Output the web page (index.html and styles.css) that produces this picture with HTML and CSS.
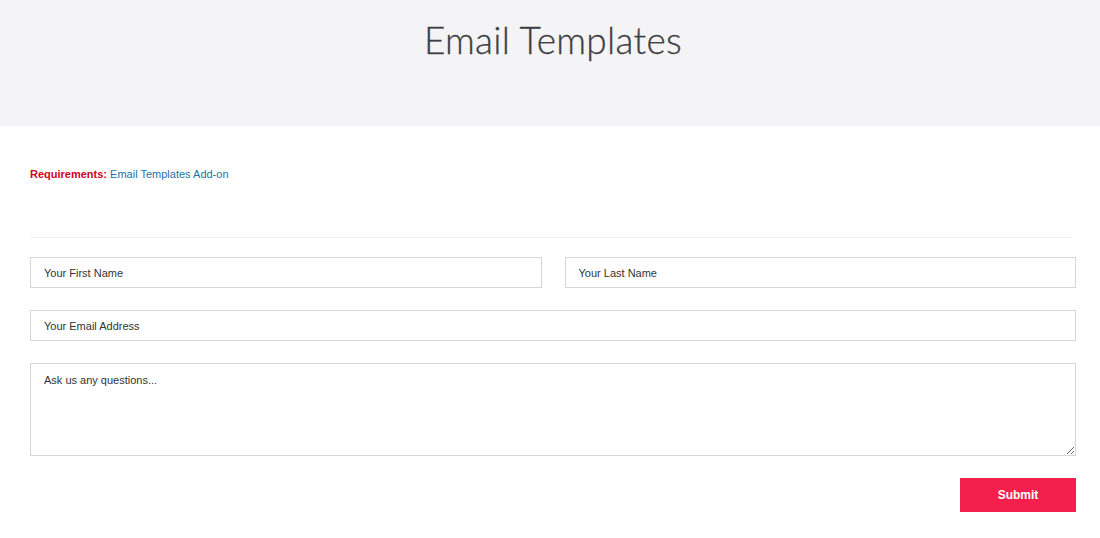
FILE: index.html
```html
<!DOCTYPE html>
<html>
<head>
<meta charset="utf-8">
<link rel="stylesheet" href="styles.css">
</head>
<body>
<header class="hero">
  <h1 class="hero-title">Email Templates</h1>
</header>
<main class="content">
  <p class="reqs"><span class="reqs-label">Requirements:</span> <a class="reqs-link" href="#">Email Templates Add-on</a></p>
  <hr class="divider">
  <form class="form">
    <div class="row row-split">
      <input class="field" type="text" placeholder="Your First Name">
      <input class="field" type="text" placeholder="Your Last Name">
    </div>
    <div class="row">
      <input class="field" type="email" placeholder="Your Email Address">
    </div>
    <div class="row">
      <textarea class="field area" placeholder="Ask us any questions..."></textarea>
    </div>
    <div class="actions">
      <button class="submit" type="button">Submit</button>
    </div>
  </form>
</main>
</body>
</html>
```
FILE: styles.css
```css
html, body {
  margin: 0;
  padding: 0;
  background: #fff;
  font-family: "Liberation Sans", Arial, sans-serif;
}
.hero {
  height: 126px;
  background: #f4f4f7;
  display: flex;
  justify-content: center;
  padding-left: 6px;
  box-sizing: border-box;
}
.hero-title {
  margin: 18px 0 0;
  font-family: Lato, "Open Sans", sans-serif;
  font-weight: 300;
  font-size: 37px;
  color: #3f3f44;
  letter-spacing: 0.3px;
  line-height: 44px;
  -webkit-text-stroke: 0.3px #3f3f44;
}
.content {
  padding: 0 24px 0 30px;
}
.reqs {
  margin: 41px 0 0;
  font-size: 11px;
  line-height: 14px;
}
.reqs-label {
  color: #d0021b;
  font-weight: bold;
}
.reqs-link {
  color: #1f6fa3;
  text-decoration: none;
}
.divider {
  margin: 56px 4px 0 0;
  border: 0;
  border-top: 1px solid #eeeeee;
  height: 0;
}
.form {
  margin-top: 19px;
  display: flex;
  flex-direction: column;
  gap: 22px;
}
.row {
  display: flex;
}
.row-split {
  gap: 23px;
}
.field {
  flex: 1;
  min-width: 0;
  box-sizing: border-box;
  height: 31px;
  margin: 0;
  border: 1px solid #d6d6d6;
  border-radius: 0;
  padding: 0 13px;
  font-family: "Liberation Sans", Arial, sans-serif;
  font-size: 11px;
  color: #333;
  background: #fff;
  outline: none;
}
.field::placeholder {
  color: #333;
  opacity: 1;
}
.area {
  height: 93px;
  padding: 10px 13px;
  resize: vertical;
}
.actions {
  display: flex;
  justify-content: flex-end;
}
.submit {
  width: 116px;
  height: 34px;
  border: 0;
  background: #f41f4d;
  color: #fff;
  font-family: "Liberation Sans", Arial, sans-serif;
  font-weight: bold;
  font-size: 12px;
  cursor: pointer;
}
```
